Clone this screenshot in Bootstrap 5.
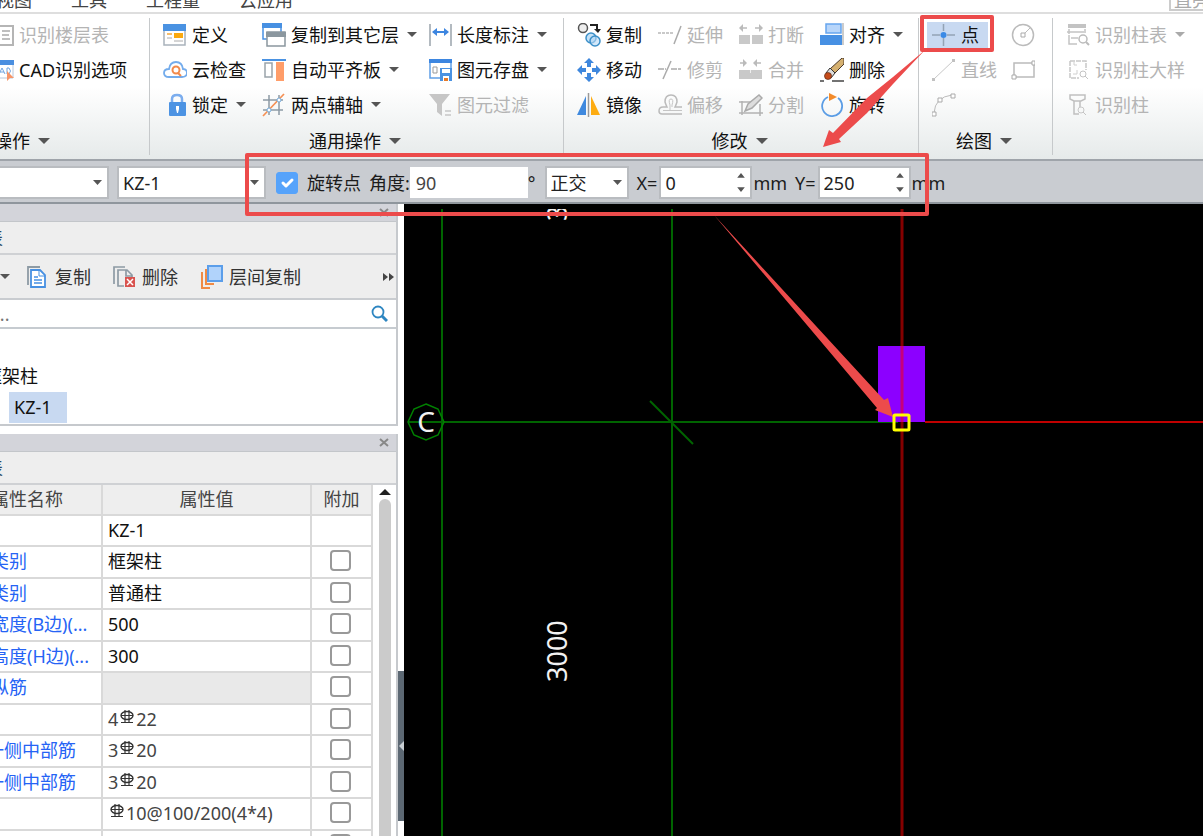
<!DOCTYPE html>
<html lang="zh-CN">
<head>
<meta charset="utf-8">
<meta name="viewport" content="width=device-width, initial-scale=1">
<title>KZ-1</title>
<link href="https://cdn.jsdelivr.net/npm/bootstrap@5.3.0/dist/css/bootstrap.min.css" rel="stylesheet">
<style>
body{font-family:"Noto Sans","Noto Sans CJK SC",sans-serif;font-size:18px;line-height:24px;color:#1c1c1c;background:#fff}
svg{flex:none}
.tabs-bar{height:14px;border-bottom:2px solid #dedede;color:#444}
.tabs-bar a{color:#444;text-decoration:none;margin-top:-12px}
.tabs-list{margin-left:-4px;gap:39px}
.find-box{width:34px;height:11px;border:2px solid #ccc;border-width:0 0 2px 2px;color:#aaa}
.find-box span{margin:-12px 0 0 3px}
.ribbon{height:147px;background:linear-gradient(#fff 50%,#e6eaea);border-bottom:2px solid #9fa4aa}
.group{position:relative;padding-top:3px;flex:none}
.group + .group::before{content:"";position:absolute;left:-1px;top:4px;bottom:4px;width:1px;background:#c6c9cb}
.group-a{width:170px;margin-left:-20px}
.group-b{width:414px}.group-c{width:355px}.group-d{width:134px}
.cols{height:105px;padding-left:13px}
.group-a .cols{padding-left:10px}
.tool{display:flex;align-items:center;gap:5px;height:35px;padding:0;border:0;background:none;color:#111;white-space:nowrap;text-align:left}
.tool > svg{width:24px;height:24px}
.tool:disabled{color:#b4b4b4}
.w81{width:81px}.w99{width:99px}.w166{width:166px}.w79{width:79px}
.caret{width:0;height:0;border:5px solid transparent;border-top-color:#555;border-bottom:0;flex:none;margin-left:3px}
.tool:disabled .caret{border-top-color:#aaa}
.group-label{height:37px;color:#111;gap:5px;border:0;background:none;padding:0 4px 0 0}
.group-label .caret{border-width:6px 6px 0}
.group-a .group-label{padding-left:14px}
.tool.picked{height:26px;background:#c8d9f1;margin:5px 0 4px -5px;padding-left:5px;width:61px}
.options{height:43px;background:#c9ccd1;border-bottom:2px solid #8f969d;padding-top:2px}
.options .form-control,.options .form-select{height:33px;border:2px solid #b9bcc0;border-radius:0;font-size:18px;line-height:24px;padding:0 4px;color:#222;flex:none;width:auto}
.options .form-select{background:#fff url("data:image/svg+xml,%3Csvg xmlns='http://www.w3.org/2000/svg' viewBox='0 0 10 5'%3E%3Cpath fill='%23555' d='M0 0h9L4.500 5z'/%3E%3C/svg%3E") no-repeat right 4px center/10px 5px}
.options input[type=number]{appearance:textfield;background:#fff url("data:image/svg+xml,%3Csvg xmlns='http://www.w3.org/2000/svg' viewBox='0 0 8 20'%3E%3Cpath fill='%23555' d='M0 5h8L4 0zM0 15h8l-4 5z'/%3E%3C/svg%3E") no-repeat right 5px center/8px 19px}
.options input::-webkit-inner-spin-button{appearance:none}
.options .floor{width:131px;margin-left:-22px}
.options .member{width:149px;margin-left:8px}
.options .angle{width:118px;border-color:#fff;height:31px;color:#444}
.options .ortho{width:84px;margin-left:9px}
.options .offset{width:93px;margin-left:2px}
.options .form-check-input{width:22px;height:22px;margin:0 9px 0 10px;border-radius:3px;flex:none}
.options .form-check-input:checked{background-color:#56a3fb;border-color:#56a3fb}
.options .unit{margin-left:1px}
.dock{width:424px;margin-left:-20px;background:#fff}
.pane{width:418px;border-right:2px solid #c6c9cd;color:#444}
.pane-bar{height:18px;background:#d3d4da;border-bottom:1px solid #c3c6ca}
.pane-bar button{border:0;background:none;padding:0 7px 0 0;height:17px;display:flex;align-items:center}
.pane-title{height:33px;background:#eee;border-bottom:2px solid #cfd1d4;padding-left:5px;color:#2b4a63}
.pane-tools{height:45px;background:#eee;border-bottom:2px solid #c9ccd0;padding-left:20px}
.pane-tools .tool{color:#333;gap:5px}
.pane-tools .after{margin-left:22px}
.search-line{height:29px;border-bottom:2px solid #c6cbd0}
.search-line input{border:0;padding:0 0 0 15px;height:26px;font-size:18px;border-radius:0;color:#555}
.member-tree{height:97px;border-bottom:2px solid #c6c9cd;padding:32px 0 0;color:#111}
.member-tree li{height:31px;line-height:31px;padding-left:4px}
.member-tree .chosen{background:#c8d9f1;width:58px;margin-left:29px;padding-left:5px}
.props{width:393px;table-layout:fixed;border-collapse:separate;border-spacing:0;line-height:24px}
.props th,.props td{padding:0 0 2px 5px;border:solid #d9d9d9;border-width:0 2px 2px 0;white-space:nowrap;height:32px;line-height:24px}
.props th{background:#eee;font-weight:400;color:#444;text-align:center;height:31px;padding:0 0 2px}
.props tr:nth-child(odd) td{height:31px}
.props td{color:#111}
.props td:first-child{padding-left:11px;color:#2563f5}
.props td:first-child.near{padding-left:6px}
.props th:first-child{padding-left:11px;text-align:left}
.props td:last-child{text-align:center;line-height:20px;vertical-align:top;padding:3px 0 0}
.props .form-check-input{width:21px;height:21px;margin:0 0 0 -3px;border:2px solid #999;border-radius:4px;display:inline-block;vertical-align:top}
.props .bars{color:#444}
.props .void{background:#e9e9e9}
.props .bars svg{vertical-align:2px;margin:0 2px}
.track{width:23px;padding-top:3px}
.thumb{width:12px;background:#cbcbcb;border-radius:6px 6px 0 0}
.fold{position:absolute;right:0;top:467px;width:6px;height:150px;background:#5c6873;border:0;padding:0}
.drawing{background:#000}
.drawing text{fill:#f2f2f2}
.notes{position:absolute;inset:0;pointer-events:none}
</style>
</head>
<body class="vh-100 overflow-hidden d-flex flex-column position-relative">

<svg width="0" height="0" class="position-absolute">
<defs>
<symbol id="sheet" viewBox="0 0 24 24"><path d="M1 3h22v19H1z" fill="#fff" stroke="#b5b5b5" stroke-width="2"/><path d="M7 8v10M12 8h8M12 12h7M12 16h8" stroke="#aaa" stroke-width="1.500"/></symbol>
<symbol id="cad" viewBox="0 0 24 24"><path d="M1 3h22v17H1z" fill="#fff" stroke="#b9c8dc"/><path d="M0 2h24v5H0z" fill="#4a8fe0"/><path d="M9 16l3-6 3 6M10 14h4M17 10v6h2q3-3 0-6z" fill="none" stroke="#6fa4e0"/><path d="M17 13l7 7h-4l-3 3z" fill="#f69568"/></symbol>
<symbol id="define" viewBox="0 0 24 24"><path d="M1 2h21v20H1z" fill="#fff" stroke="#a9b3bc" stroke-width="1.500"/><path d="M0 1h23v7H0z" fill="#4a92e2"/><path d="M4 11h5" stroke="#f4a83a" stroke-width="1.500"/><path d="M4 15h5M11 18h9" stroke="#aaa"/><path d="M11 10h9v5h-9z" fill="#fba90f"/></symbol>
<symbol id="cloud" viewBox="0 0 24 24"><path d="M6 19q-5 0-5-4 0-4 5-4 1-7 7-7t7 7q4 0 4 4t-5 4z" fill="#fff" stroke="#74acec" stroke-width="1.800"/><circle cx="13" cy="12" r="3.500" fill="#fff" stroke="#f28a4b" stroke-width="2"/><path d="M15 15l3 3" stroke="#f28a4b" stroke-width="2"/></symbol>
<symbol id="lock" viewBox="0 0 24 24"><path d="M9 11V6q0-4 5-4t5 4v5" fill="none" stroke="#7badee" stroke-width="2.500"/><rect x="6" y="9" width="17" height="14" rx="1" fill="#4c93e3"/><path d="M13 13h3v3l-1 4h-1l-1-4z" fill="#fff"/></symbol>
<symbol id="floors" viewBox="0 0 24 24"><path d="M1 1h18v15H1z" fill="#fff" stroke="#4790e2" stroke-width="1.500"/><path d="M0 0h20v5H0z" fill="#4790e2"/><path d="M5 9h18v14H5z" fill="#fff" stroke="#8b979f" stroke-width="1.500"/><path d="M4 9h20v5H4z" fill="#8b979f"/></symbol>
<symbol id="slab" viewBox="0 0 24 24"><path d="M0 2h24" stroke="#4a92e2" stroke-width="2"/><path d="M3 5h7v14H3z" fill="#fff" stroke="#9aa4aa" stroke-width="1.500"/><path d="M14 4h8v19h-8z" fill="#ff9d69"/></symbol>
<symbol id="axis" viewBox="0 0 24 24"><path d="M1 7h20M1 17h20M7 2v20M17 2v20" stroke="#8d9aa5" stroke-width="1.500"/><path d="M1 23L22 1" stroke="#f59054" stroke-width="1.700"/><circle cx="7" cy="17" r="2" fill="#fff" stroke="#71aadc"/><circle cx="17" cy="7" r="2" fill="#fff" stroke="#71aadc"/></symbol>
<symbol id="length" viewBox="0 0 24 24"><path d="M2 1v22M23 1v22" stroke="#9ba4ac" stroke-width="1.500"/><path d="M5 9h15" stroke="#3d86e0" stroke-width="2"/><path d="M4 9l5-4v8zM21 9l-5-4v8z" fill="#3d86e0"/></symbol>
<symbol id="store" viewBox="0 0 24 24"><path d="M2 2h21v18H2z" fill="#fff" stroke="#5f9ee6" stroke-width="1.500"/><path d="M1 1h23v4H1z" fill="#3d86e0"/><path d="M5 9h4v6H5z" fill="none" stroke="#999"/><path d="M12 10h12v13H12z" fill="#4a92e2"/><path d="M14 11h8v4h-8z" fill="#fff"/><path d="M15 18h6v5h-6z" fill="#fff"/><path d="M16 20h4v3h-4z" fill="#e77b2a"/></symbol>
<symbol id="filter" viewBox="0 0 24 24"><path d="M1 1h21l-8 10v12l-5-4v-8z" fill="#c6c6c6"/><path d="M17 18h6M17 22h6" stroke="#c6c6c6" stroke-width="1.500"/></symbol>
<symbol id="copy" viewBox="0 0 24 24"><circle cx="6" cy="5" r="4.500" fill="#eee" stroke="#555" stroke-width="1.500"/><path d="M13 2h7v5" fill="none" stroke="#222" stroke-width="2"/><path d="M17 6h7l-3 4z" fill="#222"/><circle cx="14" cy="15" r="5" fill="#c5e1f7" stroke="#3b8fc8" stroke-width="1.500"/><circle cx="18" cy="18" r="5" fill="#b7d9f5" fill-opacity=".6" stroke="#3b8fc8" stroke-width="1.500"/></symbol>
<symbol id="move" viewBox="0 0 24 24"><path d="M12 0l5 5h-3v4h-4V5H7zM12 24l5-5h-3v-4h-4v4H7zM0 12l5-5v3h4v4H5v3zM24 12l-5-5v3h-4v4h4v3z" fill="#3e87dd"/></symbol>
<symbol id="mirror" viewBox="0 0 24 24"><path d="M9 3v19H0z" fill="#3f89de"/><path d="M11.500 0v24" stroke="#999" stroke-width="1.500"/><path d="M14 3v19h9z" fill="#fdac12"/></symbol>
<symbol id="extend" viewBox="0 0 24 24"><path d="M0 10h16" stroke="#b8b8b8" stroke-width="1.500" stroke-dasharray="3 1"/><path d="M23 3l-7 18" stroke="#aaa" stroke-width="1.500"/></symbol>
<symbol id="trim" viewBox="0 0 24 24"><path d="M0 11h8M13 11h11" stroke="#aaa" stroke-width="1.500" stroke-dasharray="6 1 3 1"/><path d="M13 3L5 21" stroke="#aaa" stroke-width="1.500"/></symbol>
<symbol id="shift" viewBox="0 0 24 24"><path d="M24 21H4q-3 0-3-3 0-4 4-4h4q-1-2-2-5 0-7 6-7t6 7q-1 3-2 5h7" fill="none" stroke="#bbb" stroke-width="1.500"/><path d="M24 17.500H5M12 17V12q-2-6 1-6t1 6v2" fill="none" stroke="#c5c5c5"/></symbol>
<symbol id="break" viewBox="0 0 24 24"><path d="M0 12h11v9H0zM13 12h11v9H13z" fill="#c9c9c9"/><path d="M2 5h6M16 5h6" stroke="#bbb" stroke-width="1.500"/><path d="M0 5l4-4v8zM24 5l-4-4v8z" fill="#bbb"/></symbol>
<symbol id="merge" viewBox="0 0 24 24"><path d="M0 12h23v9H0z" fill="#c9c9c9"/><path d="M1 5h6M16 5h6" stroke="#bbb" stroke-width="1.500"/><path d="M8 5L4 1v8zM14 5l4-4v8z" fill="#bbb"/><path d="M11.500 12v3" stroke="#eee"/></symbol>
<symbol id="split" viewBox="0 0 24 24"><path d="M0 9h13M3 8v14M0 20h24M21 11v12" fill="none" stroke="#b2b2b2" stroke-width="1.500"/><path d="M6 18l3-7L20 2l3 3-10 10z" fill="#ddd" stroke="#aaa" stroke-width="1.500"/></symbol>
<symbol id="align" viewBox="0 0 24 24"><path d="M6 1h15v9H6z" fill="#b7d5fa" stroke="#67a5ee" stroke-width="1.500"/><path d="M0 12h22v10H0z" fill="#4790e3"/><path d="M23 0v22" stroke="#999"/></symbol>
<symbol id="erase" viewBox="0 0 24 24"><path d="M22 0h2v6l-9 9-5-4z" fill="#d5b070" stroke="#49382b"/><path d="M10 10l5 5-4 5-5-5z" fill="#ddd" stroke="#333"/><circle cx="8" cy="18" r="3.500" fill="#c64b19" stroke="#5a2a14" stroke-width=".7"/><path d="M0 23h4M12 23h12" stroke="#444" stroke-width="1.500"/></symbol>
<symbol id="spin" viewBox="0 0 24 24"><path d="M18 5a10 10 0 1 1-10-1" fill="none" stroke="#5b9de5" stroke-width="1.800"/><path d="M9 0l8 4-8 4z" fill="#f38b2b"/></symbol>
<symbol id="dot" viewBox="0 0 24 24"><path d="M0 12h8M15 12h8M11.500 1v7M11.500 15v8" stroke="#93a3b5" stroke-width="1.500"/><circle cx="11.500" cy="12" r="3" fill="#3b8ae6"/></symbol>
<symbol id="line" viewBox="0 0 24 24"><path d="M2 21L21 3" stroke="#c7c7c7"/><path d="M0 20h3v3H0zM20 1h3v3h-3z" fill="#c1c1c1"/></symbol>
<symbol id="arc" viewBox="0 0 24 24"><path d="M2 20Q3 4 20 2" fill="none" stroke="#bbb"/><path d="M0 19h4v4H0zM6 5h4v4H6zM19 1h4v4h-4z" fill="#fff" stroke="#aaa"/></symbol>
<symbol id="ring" viewBox="0 0 24 24"><circle cx="12" cy="12" r="10.500" fill="none" stroke="#bbb" stroke-width="1.500"/><path d="M12 12l7-7" stroke="#bbb"/><path d="M10 10h4v4h-4z" fill="#fff" stroke="#aaa"/></symbol>
<symbol id="rect" viewBox="0 0 24 24"><path d="M3 5h20v14H3z" fill="none" stroke="#bbb" stroke-width="1.500"/><path d="M1 17h4v4H1zM21 3h3v4h-3z" fill="#fff" stroke="#aaa"/></symbol>
<symbol id="rtable" viewBox="0 0 24 24"><path d="M2 1h18v4H2z" fill="#c3c3c3"/><path d="M3 6v5M19 6v4M1 9h17M3 12v9h8M5 15h7" fill="none" stroke="#c4c4c4" stroke-width="1.500"/><circle cx="17" cy="16" r="4" fill="#fff" stroke="#bbb" stroke-width="1.500"/><path d="M20 19l3 3" stroke="#bbb" stroke-width="2"/></symbol>
<symbol id="rdetail" viewBox="0 0 24 24"><path d="M4 3h16v9M4 3v17h9" fill="none" stroke="#c8c8c8" stroke-width="1.500" stroke-dasharray="5 1"/><path d="M8 4v3h3M7 16h4v-4" fill="none" stroke="#d0d0d0"/><circle cx="17" cy="16" r="3" fill="none" stroke="#c4c4c4"/><path d="M19 18l3 3" stroke="#c4c4c4"/></symbol>
<symbol id="rcolumn" viewBox="0 0 24 24"><path d="M4 2h15v4l-4 2H8L4 6zM8 8v13h5M14 8v6" fill="none" stroke="#c0c0c0" stroke-width="1.500"/><circle cx="15" cy="17" r="3" fill="none" stroke="#c8c8c8"/><path d="M17 19l3 3" stroke="#c4c4c4"/></symbol>
<symbol id="pages" viewBox="0 0 24 24"><path d="M2 20V2h12" fill="none" stroke="#8d9aa4" stroke-width="1.800"/><path d="M5 5h9l5 5v12H5z" fill="#fff" stroke="#4790e2" stroke-width="1.800"/><path d="M13 5v6h6" fill="none" stroke="#4790e2"/><path d="M8 12h4M8 15h8M8 18h8" stroke="#4790e2" stroke-width="1.500"/></symbol>
<symbol id="pagex" viewBox="0 0 24 24"><path d="M1 19V2h11M11 21H5V5h9l5 5v2M13 5v6h6" fill="none" stroke="#8d9aa4" stroke-width="1.700"/><path d="M12 12h10v10H12z" fill="#d9534f"/><path d="M14 14l6 6M20 14l-6 6" stroke="#fff" stroke-width="1.500"/></symbol>
<symbol id="layers" viewBox="0 0 24 24"><path d="M2 7v16h8M6 4v15h8" fill="none" stroke="#f08a44" stroke-width="2"/><path d="M8 1h14v15H8z" fill="#b1d3fb" stroke="#5b9eea" stroke-width="2"/></symbol>
<symbol id="rebar" viewBox="0 0 14 14"><ellipse cx="7" cy="5.500" rx="6" ry="4" fill="none" stroke="#333" stroke-width="1.400"/><path d="M5 0v13M9 0v13M1 12.500h12M1 5.500h12" stroke="#333" stroke-width="1.200"/></symbol>
<symbol id="close" viewBox="0 0 10 9"><path d="M1 1l8 7M9 1L1 8" stroke="#888" stroke-width="2"/></symbol>
</defs>
</svg>

<nav class="tabs-bar d-flex justify-content-between overflow-hidden flex-shrink-0">
  <div class="tabs-list d-flex"><a href="#">视图</a><a href="#">工具</a><a href="#">工程量</a><a href="#">云应用</a></div>
  <div class="find-box d-flex overflow-hidden text-nowrap"><span>直亮</span></div>
</nav>

<header class="ribbon d-flex overflow-hidden flex-shrink-0">
  <section class="group group-a">
    <div class="cols">
      <button class="tool" disabled><svg><use href="#sheet"/></svg>识别楼层表</button>
      <button class="tool"><svg><use href="#cad"/></svg>CAD识别选项</button>
    </div>
    <button class="group-label d-flex align-items-center">操作<i class="caret"></i></button>
  </section>
  <section class="group group-b">
    <div class="cols d-flex">
      <div class="w99">
        <button class="tool"><svg><use href="#define"/></svg>定义</button>
        <button class="tool"><svg><use href="#cloud"/></svg>云检查</button>
        <button class="tool"><svg><use href="#lock"/></svg>锁定<i class="caret"></i></button>
      </div>
      <div class="w166">
        <button class="tool"><svg><use href="#floors"/></svg>复制到其它层<i class="caret"></i></button>
        <button class="tool"><svg><use href="#slab"/></svg>自动平齐板<i class="caret"></i></button>
        <button class="tool"><svg><use href="#axis"/></svg>两点辅轴<i class="caret"></i></button>
      </div>
      <div>
        <button class="tool"><svg><use href="#length"/></svg>长度标注<i class="caret"></i></button>
        <button class="tool"><svg><use href="#store"/></svg>图元存盘<i class="caret"></i></button>
        <button class="tool" disabled><svg><use href="#filter"/></svg>图元过滤</button>
      </div>
    </div>
    <button class="group-label d-flex align-items-center justify-content-center w-100">通用操作<i class="caret"></i></button>
  </section>
  <section class="group group-c">
    <div class="cols d-flex">
      <div class="w81">
        <button class="tool"><svg><use href="#copy"/></svg>复制</button>
        <button class="tool"><svg><use href="#move"/></svg>移动</button>
        <button class="tool"><svg><use href="#mirror"/></svg>镜像</button>
      </div>
      <div class="w81">
        <button class="tool" disabled><svg><use href="#extend"/></svg>延伸</button>
        <button class="tool" disabled><svg><use href="#trim"/></svg>修剪</button>
        <button class="tool" disabled><svg><use href="#shift"/></svg>偏移</button>
      </div>
      <div class="w81">
        <button class="tool" disabled><svg><use href="#break"/></svg>打断</button>
        <button class="tool" disabled><svg><use href="#merge"/></svg>合并</button>
        <button class="tool" disabled><svg><use href="#split"/></svg>分割</button>
      </div>
      <div>
        <button class="tool"><svg><use href="#align"/></svg>对齐<i class="caret"></i></button>
        <button class="tool"><svg><use href="#erase"/></svg>删除</button>
        <button class="tool"><svg><use href="#spin"/></svg>旋转</button>
      </div>
    </div>
    <button class="group-label d-flex align-items-center justify-content-center w-100">修改<i class="caret"></i></button>
  </section>
  <section class="group group-d">
    <div class="cols d-flex">
      <div class="w79">
        <button class="tool picked"><svg><use href="#dot"/></svg>点</button>
        <button class="tool" disabled><svg><use href="#line"/></svg>直线</button>
        <button class="tool" disabled aria-label="弧"><svg><use href="#arc"/></svg></button>
      </div>
      <div>
        <button class="tool" disabled aria-label="圆"><svg><use href="#ring"/></svg></button>
        <button class="tool" disabled aria-label="矩形"><svg><use href="#rect"/></svg></button>
      </div>
    </div>
    <button class="group-label d-flex align-items-center justify-content-center w-100">绘图<i class="caret"></i></button>
  </section>
  <section class="group flex-fill">
    <div class="cols">
      <button class="tool" disabled><svg><use href="#rtable"/></svg>识别柱表<i class="caret"></i></button>
      <button class="tool" disabled><svg><use href="#rdetail"/></svg>识别柱大样</button>
      <button class="tool" disabled><svg><use href="#rcolumn"/></svg>识别柱</button>
    </div>
  </section>
</header>

<form class="options d-flex align-items-center overflow-hidden flex-shrink-0 text-nowrap">
  <select class="form-select floor" aria-label="楼层"><option></option></select>
  <select class="form-select member" aria-label="构件"><option>KZ-1</option></select>
  <input class="form-check-input" type="checkbox" id="pivot" checked>
  <label for="pivot">旋转点</label>
  <label for="angle" class="ms-2">角度:</label>
  <input class="form-control angle" id="angle" value="90"><span>°</span>
  <select class="form-select ortho" aria-label="捕捉"><option>正交</option></select>
  <label for="dx" class="ms-2">X=</label>
  <input class="form-control offset" type="number" id="dx" value="0"><span class="unit">mm</span>
  <label for="dy" class="ms-2">Y=</label>
  <input class="form-control offset" type="number" id="dy" value="250"><span class="unit">mm</span>
</form>

<main class="d-flex flex-fill overflow-hidden">
  <aside class="dock position-relative flex-shrink-0 overflow-hidden">
    <section class="pane">
      <div class="pane-bar d-flex justify-content-end"><button aria-label="关闭"><svg width="10" height="9"><use href="#close"/></svg></button></div>
      <div class="pane-title d-flex align-items-center">表</div>
      <div class="pane-tools d-flex align-items-center">
        <i class="caret ms-0"></i>
        <button class="tool ms-3"><svg><use href="#pages"/></svg>复制</button>
        <button class="tool after"><svg><use href="#pagex"/></svg>删除</button>
        <button class="tool after"><svg><use href="#layers"/></svg>层间复制</button>
        <button class="tool ms-auto" aria-label="更多"><span><svg width="13" height="10" class="d-block"><path d="M0 1l5 4-5 4zM6 1l5 4-5 4z" fill="#444"/></svg></span></button>
      </div>
      <div class="search-line d-flex align-items-center">
        <input class="flex-fill" type="search" placeholder="..." aria-label="搜索">
        <svg class="me-2" width="17" height="18"><circle cx="7" cy="7" r="5.500" fill="none" stroke="#2e86c1" stroke-width="1.800"/><path d="M11 11l5 5" stroke="#2e86c1" stroke-width="3"/></svg>
      </div>
      <ul class="member-tree list-unstyled mb-0"><li>框架柱</li><li class="chosen">KZ-1</li></ul>
    </section>
    <section class="pane mt-2">
      <div class="pane-bar d-flex justify-content-end"><button aria-label="关闭"><svg width="10" height="9"><use href="#close"/></svg></button></div>
      <div class="pane-title d-flex align-items-center">表</div>
      <div class="d-flex">
        <table class="props">
          <colgroup><col style="width:123px"><col style="width:209px"><col style="width:61px"></colgroup>
          <thead><tr><th>属性名称</th><th>属性值</th><th>附加</th></tr></thead>
          <tbody>
            <tr><td></td><td>KZ-1</td><td></td></tr>
            <tr><td>类别</td><td>框架柱</td><td><input class="form-check-input" type="checkbox" aria-label="附加 类别"></td></tr>
            <tr><td>类别</td><td>普通柱</td><td><input class="form-check-input" type="checkbox" aria-label="附加 类别"></td></tr>
            <tr><td>宽度(B边)(...</td><td>500</td><td><input class="form-check-input" type="checkbox" aria-label="附加 宽度"></td></tr>
            <tr><td>高度(H边)(...</td><td>300</td><td><input class="form-check-input" type="checkbox" aria-label="附加 高度"></td></tr>
            <tr><td>纵筋</td><td class="void"></td><td><input class="form-check-input" type="checkbox" aria-label="附加 纵筋"></td></tr>
            <tr><td></td><td class="bars">4<svg width="14" height="14"><use href="#rebar"/></svg>22</td><td><input class="form-check-input" type="checkbox" aria-label="附加"></td></tr>
            <tr><td class="near">一侧中部筋</td><td class="bars">3<svg width="14" height="14"><use href="#rebar"/></svg>20</td><td><input class="form-check-input" type="checkbox" aria-label="附加 中部筋"></td></tr>
            <tr><td class="near">一侧中部筋</td><td class="bars">3<svg width="14" height="14"><use href="#rebar"/></svg>20</td><td><input class="form-check-input" type="checkbox" aria-label="附加 中部筋"></td></tr>
            <tr><td></td><td class="bars"><svg width="14" height="14"><use href="#rebar"/></svg>10@100/200(4*4)</td><td><input class="form-check-input" type="checkbox" aria-label="附加"></td></tr>
            <tr><td></td><td></td><td><input class="form-check-input" type="checkbox" aria-label="附加"></td></tr>
          </tbody>
        </table>
        <div class="track d-flex flex-column align-items-center">
          <svg width="12" height="7" class="mb-1"><path d="M0 7l6-6 6 6z" fill="#222"/></svg>
          <div class="thumb flex-fill"></div>
        </div>
      </div>
    </section>
    <button class="fold" aria-label="收起"><svg width="6" height="10" class="d-block"><path d="M6 0v10L1 5z" fill="#c9ced3"/></svg></button>
  </aside>

  <div class="drawing flex-fill">
    <svg width="100%" height="100%" class="d-block">
      <svg y="5" width="100%" height="100%">
        <g fill="none" stroke="#006400" stroke-width="2">
          <path d="M38 0v2000M268 0v2000M5 213h489"/>
          <path d="M246 192l43 43"/>
          <path d="M22 195l12 5 6 13-6 13-12 5-12-5-6-13 6-13z" stroke="#008000" stroke-width="1.500"/>
        </g>
        <path d="M474 137h47v76h-47z" fill="#8c00ff"/>
        <path d="M498 0v2000" stroke="#f00" stroke-opacity=".52" stroke-width="3"/>
        <path d="M521 213h3000" stroke="#c00000" stroke-width="2"/>
        <text x="22" y="223" font-size="28" text-anchor="middle">C</text>
        <text transform="translate(163 473) rotate(-90)" font-size="27">3000</text>
        <text transform="translate(163 12) rotate(-90)" font-size="27">3</text>
      </svg>
    </svg>
  </div>
</main>

<svg class="notes" width="100%" height="100%">
  <g fill="none" stroke="#ec4b4b" stroke-width="4" stroke-linejoin="round">
    <rect x="247" y="155" width="680" height="59"/>
    <rect x="922" y="17" width="70" height="33"/>
  </g>
  <g fill="#ec4b4b">
    <path d="M925 50L893 77 867 98 833 133 829 130 823 147 841 142 839 139 867 113 893 84z"/>
    <path d="M714 215L884 400 888 398 893 417 875 410 877 408z"/>
  </g>
  <rect x="894" y="415" width="15" height="15" rx="1" fill="none" stroke="#ff0" stroke-width="3"/>
</svg>

<script src="https://cdn.jsdelivr.net/npm/bootstrap@5.3.0/dist/js/bootstrap.bundle.min.js"></script>
</body>
</html>
